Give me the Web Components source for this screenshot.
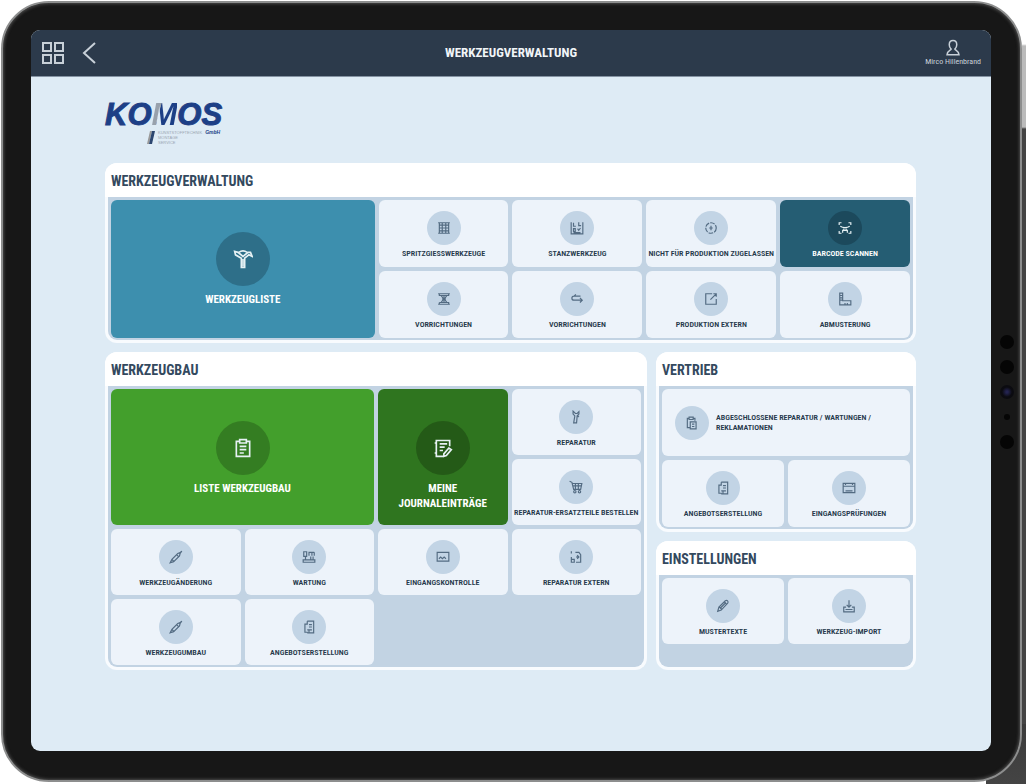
<!DOCTYPE html>
<html lang="de">
<head>
<meta charset="utf-8">
<meta name="viewport" content="width=device-width, initial-scale=1">
<title>Werkzeugverwaltung</title>
<style>
  html { background: #fff; }
  body {
    margin: 0;
    min-height: 100vh;
    font-family: "Roboto Condensed", "Roboto", sans-serif;
    color: #33495e;
    background:
      linear-gradient(#3b3b3b, #444) right bottom / 40px 60px no-repeat,
      linear-gradient(#fff 0 44px, #bbb 46px 127px, #444 129px) right top / 4px 100% no-repeat,
      #fff;
  }
</style>
</head>
<body>
<tablet-frame>
  <app-bar slot="bar" user="Mirco Hillenbrand">Werkzeugverwaltung</app-bar>
  <komos-logo></komos-logo>
  <tile-board>
    <tile-panel class="full" heading="Werkzeugverwaltung" style="--cols:6;--row:67px">
      <tile-button icon="hammer" tone="blue" class="big wide">Werkzeugliste</tile-button>
      <tile-button icon="mold">Spritzgiesswerkzeuge</tile-button>
      <tile-button icon="stamp">Stanzwerkzeug</tile-button>
      <tile-button icon="blocked">Nicht für Produktion zugelassen</tile-button>
      <tile-button icon="scan" tone="petrol">Barcode scannen</tile-button>
      <tile-button icon="fixture">Vorrichtungen</tile-button>
      <tile-button icon="swap">Vorrichtungen</tile-button>
      <tile-button icon="external">Produktion extern</tile-button>
      <tile-button icon="ruler">Abmusterung</tile-button>
    </tile-panel>
    <tile-panel class="tall" heading="Werkzeugbau" style="--cols:4;--row:66px">
      <tile-button icon="clipboard" tone="green" class="big wide">Liste Werkzeugbau</tile-button>
      <tile-button icon="journal" tone="forest" class="big">Meine Journaleinträge</tile-button>
      <tile-button icon="wrench">Reparatur</tile-button>
      <tile-button icon="cart">Reparatur-Ersatzteile bestellen</tile-button>
      <tile-button icon="tool">Werkzeugänderung</tile-button>
      <tile-button icon="service">Wartung</tile-button>
      <tile-button icon="control">Eingangskontrolle</tile-button>
      <tile-button icon="repairout">Reparatur extern</tile-button>
      <tile-button icon="tool">Werkzeugumbau</tile-button>
      <tile-button icon="offer">Angebotserstellung</tile-button>
    </tile-panel>
    <tile-panel heading="Vertrieb" style="--cols:2;--row:67px">
      <tile-button icon="done" class="line wide">Abgeschlossene Reparatur / Wartungen / Reklamationen</tile-button>
      <tile-button icon="offer">Angebotserstellung</tile-button>
      <tile-button icon="box">Eingangsprüfungen</tile-button>
    </tile-panel>
    <tile-panel heading="Einstellungen" style="--cols:2;--row:66px">
      <tile-button icon="pencil">Mustertexte</tile-button>
      <tile-button icon="import">Werkzeug-Import</tile-button>
    </tile-panel>
  </tile-board>
</tablet-frame>

<script>
const ICONS = {
  grid: '<path d="M2 2h8v8H2zM14 2h8v8h-8zM2 14h8v8H2zM14 14h8v8h-8z"/>',
  back: '<path d="M19 2 8 12l11 10"/>',
  user: '<path d="M12 2c3 0 5 2.200 5 5.500 0 2.500-1 4.500-2.500 6 0 1.500 5 2 5.500 7.500H4c.5-5.500 5.500-6 5.500-7.500C8 12 7 10 7 7.500 7 4.200 9 2 12 2z"/>',
  hammer: '<path d="M10 22V11L3 7l-1-4 4 1 6 5 6-5 3 0 2 5-4-2-5 4v11z"/><path d="M7 4c3-2 7-2 10 0M12 12v9"/>',
  mold: '<path d="M2 3h20M4 3v4h16V3M4 7v10h16V7M9 3v18M15 3v18M4 12h16M2 21h20M4 17v4M20 17v4"/>',
  stamp: '<path d="M2 2v20h20V2M6 3v6h4M15 2v6h4M6 18v-5h3v5zM13 13l2 3 3-4M6 20h12"/>',
  blocked: '<circle cx="12" cy="12" r="9" stroke-dasharray="8 2"/><path d="M12 8v8M9 12h6"/>',
  scan: '<path d="M2 7V3h4M22 7V3h-4M2 17v4h4M22 17v4h-4M4 9c4 3 12 3 16 0M8 20v-4h8v4M10 13v3M14 13v3"/>',
  fixture: '<path d="M2 3h20M4 3v3h16V3M7 6l3 4v4l-3 4M17 6l-3 4v4l3 4M12 6v12M4 18h16v3M2 21h20M4 18v3"/>',
  swap: '<path d="M18 7H7c-5 0-5 7 0 7h14M17 10l4 4-4 4M10 4 7 7"/>',
  external: '<path d="M14 3H3v18h18v-9M11 13 20 4M16 3h5v5"/>',
  ruler: '<path d="M3 2v20h19v-7H8V2zM4 6h3M4 10h3M4 14h3M12 19v3M16 19v3"/>',
  clipboard: '<path d="M8 4H4v18h16V4h-4M8 2h8v4H8zM8 10h8M8 14h8M8 18h5"/>',
  journal: '<path d="M20 10V3H4v19h9M2 6h3M2 18h3M8 7h9M8 11h6M8 15h4M13 19l6-7 3 2-6 7-3 1z"/>',
  wrench: '<path d="M7 2v5l3 3-2 12h5l1-12 3-3V3l-3 3h-3zM15 12l2-2"/>',
  cart: '<path d="M1 2l4 2 3 12h12l2-10H6M7 10h14M11 6v10M16 6v10"/><circle cx="10" cy="20" r="2"/><circle cx="18" cy="20" r="2"/>',
  tool: '<path d="M2 22l3-6L15 6l3-1 4-3-3 4-1 4L8 20zM13 8l3 3M5 16l3 3"/>',
  service: '<path d="M3 3h5v8H3zM11 4h10M12 4v6M17 4v6M21 4v6M2 21h20v-4H2zM6 11v6M15 11v6M19 11v6"/>',
  control: '<path d="M2 4h20v15H2zM5 15l3-3 3 3 3-3 3 3M5 19h14"/>',
  repairout: '<path d="M4 2v4M4 12v9h5v-5H4M11 4h6l3 4v13h-8M12 12h5M14 9l3 3-3 3"/>',
  offer: '<path d="M9 2h11v20H9M9 2v5H5v14h5M12 8h5M12 12h5M9 17h8M12 17v4"/>',
  done: '<path d="M7 4H4v16h5M7 2h7v4H7zM14 4h3v4M9 10h10v12H9zM12 14h4M12 18h4"/>',
  box: '<path d="M2 4h20v16H2zM2 9h20M6 4v3M18 4v3M6 17h12"/>',
  pencil: '<path d="M3 21l2-7L16 3c3-2 6 1 4 4L9 19zM6 14l4 4M14 5l4 4M8 15 17 6"/>',
  import: '<path d="M12 2v12M8 10l4 4 4-4M7 14H3v8h18v-8h-4M6 18h12"/>'
};

function define(name, markup, setup) {
  const template = document.createElement('template');
  template.innerHTML = markup;
  customElements.define(name, class extends HTMLElement {
    constructor() {
      super();
      this.attachShadow({ mode: 'open' }).append(template.content.cloneNode(true));
    }
    connectedCallback() { if (setup) setup(this, this.shadowRoot); }
  });
}

define('line-icon', `
  <style>
    :host { display: block; width: 14px; height: 14px; flex: none; }
    svg { display: block; width: 100%; height: 100%; fill: none; stroke: currentColor; stroke-width: var(--stroke, 2); }
  </style>
  <svg viewBox="0 0 24 24" aria-hidden="true"></svg>`,
  (host, root) => { root.querySelector('svg').innerHTML = ICONS[host.getAttribute('name')] || ''; });

define('tablet-frame', `
  <style>
    :host {
      display: flex; box-sizing: border-box; position: relative;
      min-height: calc(100vh - 3px); margin: 1px 4px 1px 1px; padding: 27px 29px 29px 28px;
      border: 2px solid #8d8e8e; border-radius: 48px;
      background: #171717; box-shadow: inset 0 0 3px 1px #4a4a4a;
    }
    .screen {
      flex: 1; display: flex; flex-direction: column; min-width: 0;
      border-radius: 9px; overflow: hidden; background: #deebf5;
    }
    main { padding: 22px 75px 40px 74px; }
    .sensors {
      position: absolute; right: 6px; top: 0; bottom: 0; width: 14px;
      display: flex; flex-direction: column; align-items: center; justify-content: center; gap: 11px;
    }
    .sensors i { width: 14px; height: 14px; border-radius: 50%; background: #050505; }
    .sensors .lens { background: radial-gradient(#232350 10%, #0b0b10 50%); }
    .sensors .dot { width: 6px; height: 6px; margin: 4px 0; }
  </style>
  <div class="screen"><slot name="bar"></slot><main><slot></slot></main></div>
  <div class="sensors" aria-hidden="true"><i></i><i></i><i class="lens"></i><i class="dot"></i><i></i></div>`);

define('app-bar', `
  <style>
    :host { display: block; background: #2c3a4b; color: #f1f5f8; border-bottom: 1px solid #8593a3; }
    header { display: grid; grid-template-columns: 1fr auto 1fr; align-items: center; height: 46px; padding: 0 10px; }
    button { all: unset; cursor: pointer; color: #c8d0d8; }
    nav { display: flex; gap: 11px; }
    nav line-icon { width: 24px; height: 24px; --stroke: 2; }
    h1 { margin: 0; font-size: 13px; line-height: 20px; font-weight: 700; text-transform: uppercase; }
    .user { justify-self: end; display: flex; flex-direction: column; align-items: center; font-size: 8px; line-height: 10px; }
    .user line-icon { width: 18px; height: 18px; --stroke: 2; }
  </style>
  <header>
    <nav>
      <button type="button" aria-label="Übersicht"><line-icon name="grid"></line-icon></button>
      <button type="button" aria-label="Zurück"><line-icon name="back"></line-icon></button>
    </nav>
    <h1><slot></slot></h1>
    <button type="button" class="user"><line-icon name="user"></line-icon><span></span></button>
  </header>`,
  (host, root) => { root.querySelector('.user span').textContent = host.getAttribute('user'); });

define('komos-logo', `
  <style>
    :host { display: block; width: 120px; height: 64px; font-family: "Liberation Sans", sans-serif; }
    .name {
      font-size: 31px; line-height: 31px; font-weight: 700; font-style: italic; color: #1d3f86;
      -webkit-text-stroke: 1px #1d3f86;
    }
    .name span {
      background: linear-gradient(105deg, #98a1ac 32%, #1d3f86 34%); background-clip: text; -webkit-background-clip: text;
      color: transparent; -webkit-text-stroke: 0;
    }
    .sub { display: flex; gap: 3px; padding-left: 42px; font-size: 4px; line-height: 5px; color: #9aa6b2; }
    svg { width: 8px; height: 14px; flex: none; }
    .sub div { white-space: nowrap; }
    b { font-style: italic; font-size: 5px; color: #1d3f86; }
  </style>
  <div class="name">KO<span>M</span>OS</div>
  <div class="sub">
    <svg viewBox="0 0 8 14" aria-hidden="true"><path d="M3 1h2L2 14H0z" fill="#999"/><path d="M5 1h3L5 14H2z" fill="#2c4670"/></svg>
    <div>KUNSTSTOFFTECHNIK<br>MONTAGE<br>SERVICE</div><b>GmbH</b>
  </div>`);

define('tile-board', `
  <style>
    :host { display: grid; grid-template-columns: 542fr 260fr; grid-template-rows: auto auto 1fr; gap: 9px; }
    ::slotted(.full) { grid-column: 1 / -1; }
    ::slotted(.tall) { grid-row: span 2; }
  </style>
  <slot></slot>`);

define('tile-panel', `
  <style>
    :host {
      display: flex; flex-direction: column; box-sizing: border-box;
      border: 3px solid #f8fbfe; border-top: 0; border-radius: 12px; background: #f8fbfe;
    }
    h2 {
      margin: 0 -3px; padding: 8px 6px 6px; border-radius: 12px 12px 0 0; background: #fff;
      font-size: 14px; line-height: 20px; font-weight: 700; text-transform: uppercase;
    }
    .tiles {
      flex: 1; display: grid; align-content: start; gap: 4px; padding: 3px 3px 2px;
      grid-template-columns: repeat(var(--cols), minmax(0, 1fr)); grid-auto-rows: var(--row);
      border-radius: 0 0 9px 9px; background: #c2d3e3; grid-auto-flow: dense;
    }
    ::slotted(.wide) { grid-column: span 2; }
    ::slotted(.big) { grid-row: span 2; }
  </style>
  <h2></h2>
  <div class="tiles"><slot></slot></div>`,
  (host, root) => { root.querySelector('h2').textContent = host.getAttribute('heading'); });

define('tile-button', `
  <style>
    :host { display: block; --tile: #edf3fa; --disc: #c2d4e5; --ink: #26394b; --glyph: #536b82; }
    :host([tone]) { --ink: #fff; --glyph: #e6f1f4; }
    :host([tone=blue]) { --tile: #3d8fae; --disc: #2e6f89; }
    :host([tone=petrol]) { --tile: #255d73; --disc: #1c495c; }
    :host([tone=green]) { --tile: #439f2c; --disc: #347d22; }
    :host([tone=forest]) { --tile: #2f751f; --disc: #245a17; }
    button {
      box-sizing: border-box; width: 100%; height: 100%; margin: 0; border: 0; padding: 11px 0 0;
      display: flex; flex-direction: column; align-items: center; gap: 3px;
      border-radius: 6px; background: var(--tile); color: var(--ink); cursor: pointer;
      font: 600 8px/12px "Roboto Condensed", "Roboto", sans-serif; text-transform: uppercase;
    }
    .disc {
      flex: none; display: grid; place-items: center; width: 34px; height: 34px;
      border-radius: 50%; background: var(--disc); color: var(--glyph);
    }
    :host(.big) button { padding: 32px 16px 0; gap: 6px; font-size: 11px; font-weight: 700; line-height: 15px; }
    :host(.big) .disc { width: 54px; height: 54px; }
    :host(.big) line-icon { width: 20px; height: 20px; }
    :host(.line) button { flex-direction: row; gap: 7px; padding: 0 30px 0 13px; line-height: 10px; text-align: left; }
  </style>
  <button type="button"><span class="disc"><line-icon></line-icon></span><span><slot></slot></span></button>`,
  (host, root) => {
    const icon = root.querySelector('line-icon');
    const fresh = document.createElement('line-icon');
    fresh.setAttribute('name', host.getAttribute('icon'));
    icon.replaceWith(fresh);
  });
</script>
</body>
</html>
